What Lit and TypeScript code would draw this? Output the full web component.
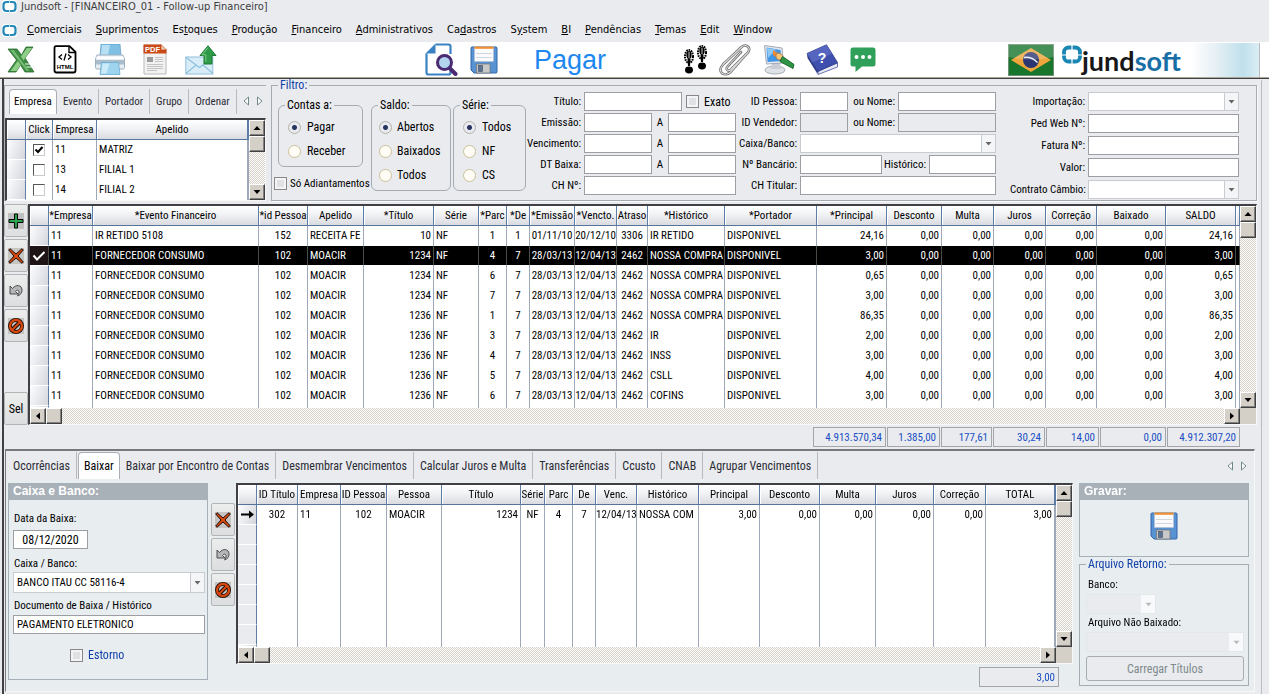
import { LitElement, html, css, nothing } from "lit";
import { customElement, property } from "lit/decorators.js";
import { classMap } from "lit/directives/class-map.js";

type Align = "l" | "c" | "r";
interface Column { title: string; width: number; align: Align; }
const col = (title: string, width: number, align: Align = "l"): Column => ({ title, width, align });

/* ---------- icons ---------- */
const plusIcon = html`<svg width="16" height="16" viewBox="0 0 16 16"><rect width="16" height="16" fill="#c0c0c0"/><path d="M6.500 1h3v5.500H15v3H9.500V15h-3V9.500H1v-3h5.500z" fill="#2fa44f" stroke="#000"/></svg>`;
const crossIcon = html`<svg width="16" height="16" viewBox="0 0 16 16"><rect width="16" height="16" fill="#c6c4c2"/><path d="M2 .7 8 6 14 .7 15.300 2 10 8l5.300 6L14 15.300 8 10l-6 5.300L.7 14 6 8 .7 2z" fill="#d9480f" stroke="#1a0d06"/></svg>`;
const undoIcon = html`<svg width="14" height="13" viewBox="0 0 14 13"><path d="M1 2v8h8L6.500 7.500C8 5.500 10 5.700 10 8c0 1.500-.7 3-1.500 4 3-1 4.800-3.300 4.500-6.500C12.600 1 7 0 3.500 4.500z" fill="#b4b6b8" stroke="#4a4e50"/></svg>`;
const stopIcon = html`<svg width="16" height="16" viewBox="0 0 16 16"><rect width="16" height="16" fill="#c6c4c2"/><circle cx="8" cy="8" r="6" fill="none" stroke="#1a0d06" stroke-width="4"/><path d="M4 12 12 4" stroke="#1a0d06" stroke-width="4"/><circle cx="8" cy="8" r="6" fill="none" stroke="#d9480f" stroke-width="2.400"/><path d="M4 12 12 4" stroke="#d9480f" stroke-width="2"/></svg>`;
const leftTri = html`<svg width="7" height="10" viewBox="0 0 7 10"><path d="M5.500 1v8L1 5z" fill="#fff" stroke="#6f8a84"/></svg>`;
const rightTri = html`<svg width="7" height="10" viewBox="0 0 7 10"><path d="M1.500 1v8L6 5z" fill="#fff" stroke="#6f8a84"/></svg>`;

const brandMark = html`<svg width="15" height="13" viewBox="0 0 15 13"><rect width="15" height="13" rx="3" fill="#fff"/><rect x="1.500" y="2" width="12" height="9" rx="3" fill="none" stroke="#2389b8" stroke-width="2.200"/><path d="M7.500 0v3M7.500 10v3" stroke="#bfe0ee" stroke-width="1"/></svg>`;

const excelIcon = html`<svg width="28" height="28" viewBox="0 0 28 28"><path d="M1 3h9l4.500 6L19 1h7l-8 11 9 14h-9l-4.500-7L9 26H1l8.500-12z" fill="#3d8b40" stroke="#2a6a30" stroke-width=".8"/><path d="M20 2h5L9.500 25H3.500z" fill="#8fce86"/><path d="M2.500 4h6.500l15.500 21h-6z" fill="#3f8f45"/><path d="M3.500 4h3L22 25h-2z" fill="#78bd78"/><path d="M18 18h8M19.500 21h7.500" stroke="#f4fbf2" stroke-width="1.200"/></svg>`;
const htmlIcon = html`<svg width="24" height="29" viewBox="0 0 24 29"><path d="M3 1.200h13.500L22.500 7v18.500q0 2-2 2H3.500q-2 0-2-2V3q0-1.800 1.500-1.800z" fill="#fff" stroke="#000" stroke-width="1.800"/><path d="M16 1.200V7.500h6.500" fill="none" stroke="#000" stroke-width="1.400"/><path d="M9 9.500 6 12l3 2.500M15 9.500l3 2.500-3 2.500M13 8.500 11 15.500" fill="none" stroke="#000" stroke-width="1.300"/><text x="12" y="24" text-anchor="middle" font-family="Liberation Sans, sans-serif" font-size="6" font-weight="700">HTML</text></svg>`;
const printerIcon = html`<svg width="30" height="31" viewBox="0 0 30 31"><path d="M6 0h19l1 12H5z" fill="#7fc0e4" stroke="#5b9cc4" stroke-width=".7"/><path d="M7 1h8l-2 10H6z" fill="#b8e0f4"/><path d="M2 11h26l1.500 4v8.500q0 1.500-1.500 1.500H2q-1.500 0-1.500-1.500V15z" fill="#e6eef4" stroke="#9db0bf"/><path d="M.8 16h28.400v4.500H.8z" fill="#a9bccb"/><path d="M1.500 12.500h27v2.500h-27z" fill="#fff"/><path d="M6.500 18.500h17l1.500 12H5z" fill="#9fd4ef" stroke="#68a9d0" stroke-width=".8"/><path d="M7.500 19.500h7l-3 10H6.200z" fill="#ccebf8"/></svg>`;
const pdfIcon = html`<svg width="24" height="31" viewBox="0 0 24 31"><path d="M1 1h17l5 5v24H1z" fill="#f2f2f2" stroke="#b9b9b9"/><path d="M.5 .5h17.500V9.500H.5zM18 5.500h5.500v4H18z" fill="#cb4a16"/><path d="M18 .5v5.500h5.500z" fill="#f6c9b0" stroke="#b04010" stroke-width=".6"/><text x="9.500" y="7.900" text-anchor="middle" font-family="Liberation Sans, sans-serif" font-size="7.500" font-weight="700" fill="#fff">PDF</text><rect x="4" y="13" width="6" height="5" fill="#9d9d9d"/><path d="M12 13.500h8M12 15.500h8M12 17.500h8M4 20.500h16M4 22.500h16M4 24.500h16M4 26.500h10" stroke="#c4c4c4"/></svg>`;
const mailIcon = html`<svg width="32" height="30" viewBox="0 0 32 30"><rect x=".8" y="12" width="27" height="17" fill="#d9edf8" stroke="#8fbfdc"/><path d="M1 28.500 11 20l3.500 2.500L18 20l10 8.500M1 12.500l13.500 10 13-10" fill="none" stroke="#8fc0de" stroke-width="1.200"/><path d="M23 .8 31 10.500h-4v8.500h-8v-8.500h-4z" fill="#2f9a48" stroke="#207a34"/><path d="M23 2.500 17 9.800h3.800v7" fill="none" stroke="#7ccd8b"/></svg>`;
const searchIcon = html`<svg width="33" height="33" viewBox="0 0 33 33"><path d="M10.500 1.500h13q2 0 2 2V11M25.500 28v1.500q0 2-2 2h-20q-2 0-2-2V10.500" fill="none" stroke="#3a82c4" stroke-width="2.200"/><path d="M10.500 .5v10H.5z" fill="#3a82c4"/><circle cx="19.500" cy="19.500" r="7" fill="#b3d4ee" stroke="#4a2a73" stroke-width="3"/><path d="M25 25.500 30.500 31" stroke="#4a2a73" stroke-width="4" stroke-linecap="round"/></svg>`;
const floppyIcon = html`<svg width="28" height="28" viewBox="0 0 28 28"><path d="M2 1h24q1 0 1 1v24q0 1-1 1H4l-3-3V2q0-1 1-1z" fill="#5793d3" stroke="#3565a8"/><rect x="4.500" y="1" width="19" height="14.500" fill="#fbfbfd" stroke="#b3c0d4" stroke-width=".7"/><rect x="4.500" y=".6" width="19" height="2.200" fill="#ef9030"/><path d="M6 7.500h16M6 11.500h16" stroke="#d0d6e0"/><rect x="6.500" y="18" width="13.500" height="9" fill="#c9c9c9" stroke="#77797d" stroke-width=".8"/><rect x="8.500" y="19.500" width="4" height="6" fill="#5d7391" stroke="#394c68" stroke-width=".6"/></svg>`;
const stepsIcon = html`<svg width="25" height="30" viewBox="0 0 25 30"><ellipse cx="6" cy="11.500" rx="4" ry="6.500" fill="none" stroke="#000" stroke-width="2" stroke-dasharray="1.600 .8"/><ellipse cx="6" cy="10" rx="2.600" ry="4" /><path d="M4.500 14h3l-.5 7H5z"/><ellipse cx="6" cy="25" rx="4" ry="3.400"/><ellipse cx="19" cy="7.500" rx="4" ry="6.500" fill="none" stroke="#000" stroke-width="2" stroke-dasharray="1.600 .8"/><ellipse cx="19" cy="6" rx="2.600" ry="4"/><path d="M17.500 10h3l-.5 7h-2z"/><ellipse cx="19" cy="21" rx="4" ry="3.400"/><path d="M6 7v6M19 3v6" stroke="#fff" stroke-width=".8"/></svg>`;
const clipIcon = html`<svg width="33" height="32" viewBox="0 0 33 32"><path d="M22 8 8.500 22.500c-2.500 3 1 5.500 3.500 3L28.500 9c5-5.500-2-9.500-6-6L4 20.500c-7 8 2 12.500 7 8L24 14" fill="none" stroke="#6f6f6f" stroke-width="2.600" stroke-linecap="round"/><path d="M22 8 8.500 22.500c-2.500 3 1 5.500 3.500 3L28.500 9c5-5.500-2-9.500-6-6L4 20.500c-7 8 2 12.500 7 8L24 14" fill="none" stroke="#dcdcdc" stroke-width="1.100" stroke-linecap="round"/></svg>`;
const paintIcon = html`<svg width="32" height="31" viewBox="0 0 32 31"><ellipse cx="12" cy="26" rx="10" ry="4" fill="#dfe3e8" stroke="#a7adb5"/><path d="M9 19h8l1 6H8z" fill="#c9ced6"/><path d="M1.500 1.500 19 4l1.500 15L3.500 20z" fill="#e4e8ee" stroke="#a4abb6"/><path d="M3.500 3.500 17.500 6l1 11-14 1z" fill="#3f96e6"/><path d="M4 4 13 5.500 5 14z" fill="#8fc8f6"/><path d="M10 6l8 5-1 5-7-5z" fill="#ee8a3c"/><path d="M13 10c3-2 6 0 7 3l-3 3c-4 0-4-3-4-6z" fill="#f4c87a" stroke="#a8672a" stroke-width=".7"/><path d="M19.500 12.500 31 20.500l-1 4-13-7z" fill="#2f9444" stroke="#1d6b2d"/></svg>`;
const bookIcon = html`<svg width="33" height="31" viewBox="0 0 33 31"><path d="M1 9.500 12 27l-.5 3L1.500 14z" fill="#2f3f8f"/><path d="M12 27 31.500 19v4L12 30.500z" fill="#e8eaf2" stroke="#4653a0" stroke-width=".8"/><path d="M1 9.500 20.500 .8 31.500 18.500 12 27.500z" fill="#3f4fae" stroke="#2a3788" stroke-width=".8"/><path d="M1 9.500 20.500 .8 26 9.500 6.500 18.500z" fill="#6676cc" opacity=".6"/><text x="16" y="19" text-anchor="middle" font-family="Liberation Sans, sans-serif" font-size="14" font-weight="700" fill="#fff">?</text></svg>`;
const chatIcon = html`<svg width="26" height="26" viewBox="0 0 26 26"><path d="M3 .5h20q2.500 0 2.500 2.500v14q0 2.500-2.500 2.500H12L5.500 25v-5.500H3Q.5 19.500.5 17V3Q.5.5 3 .5z" fill="#2fa05a"/><g fill="#fff"><circle cx="6.500" cy="10" r="2"/><circle cx="13" cy="10" r="2"/><circle cx="19.500" cy="10" r="2"/></g></svg>`;
const flagIcon = html`<svg width="46" height="32" viewBox="0 0 46 32"><rect width="46" height="32" fill="#17752c"/><rect x=".5" y=".5" width="45" height="31" fill="none" stroke="#6f8f74"/><path d="M23 4 43 16 23 28 3 16z" fill="#eda53c"/><circle cx="23" cy="16" r="8" fill="#2b3570"/><path d="M16 13.500q7.500-1 13.500 5" fill="none" stroke="#e6ecf5" stroke-width="1.500"/><path d="M0 0h46v13Q23 18 0 13z" fill="#fff" opacity=".2"/></svg>`;
const logoMark = html`<svg width="20" height="20" viewBox="0 0 20 20"><rect x="2" y="2.500" width="16" height="14" rx="4.500" fill="none" stroke="#1a86b4" stroke-width="3.800"/><path d="M10 0v6M10 13v6" stroke="#fff" stroke-width="1.200"/><path d="M0 10h5M15 10h5" stroke="#fff" stroke-width="1"/></svg>`;

const gridScroll = css`
  .bar { display: flex; background: repeating-conic-gradient(#fff 0 25%, #d4d0c8 0 50%) 0 0 / 2px 2px; }
  .bar.v { flex-direction: column; grid-column: 2; grid-row: 1; }
  .bar.h { flex-direction: row; grid-column: 1; grid-row: 2; }
  .bar button, .thumb { flex: none; width: 16px; height: 16px; padding: 0; box-sizing: border-box; display: grid; place-items: center; background: #d4d0c8; border: 1px solid; border-color: #fff #404040 #404040 #fff; box-shadow: inset -1px -1px #808080; }
  .space { flex: 1; }
  .corner { background: #d4d0c8; }
`;
const arrow = (d: string, label: string) => html`<button type="button" aria-label=${label}><svg width="8" height="8" viewBox="0 0 8 8"><path d=${d}/></svg></button>`;

@customElement("data-grid")
class DataGrid extends LitElement {
  @property({ attribute: false }) columns: Column[] = [];
  @property({ attribute: false }) rows: (string | boolean)[][] = [];
  @property({ type: Number }) blanks = 0;
  @property({ type: Number }) selected = -1;
  @property({ type: Number }) current = -1;
  @property({ type: Boolean }) hbar = false;
  @property({ type: Boolean }) stub = false;
  @property() caption = "";

  static styles = [gridScroll, css`
    :host { display: block; min-width: 0; border: 2px solid; border-color: #3f3f44 #f8f8f8 #f8f8f8 #3f3f44; border-right-width: 1px; border-bottom-width: 1px; }
    .frame { display: grid; grid-template-columns: minmax(0, 1fr) 16px; }
    table { width: 100%; table-layout: fixed; border-collapse: separate; border-spacing: 0; background: #fff; font: 11px/18px "Roboto Condensed", "Liberation Sans", sans-serif; color: #000; }
    th, td { box-sizing: border-box; height: 20px; padding: 0 2px; white-space: nowrap; overflow: hidden; font-weight: 400; }
    th { padding: 0; text-align: center; background: linear-gradient(#fff, #f1f2f5 45%, #d9dbe0); border-right: 1px solid #5d7da6; border-bottom: 1px solid #54749c; box-shadow: inset 1px 0 #fff; }
    td { border-right: 1px solid #9ea8b8; }
    td.c { text-align: center; padding: 0; } td.r { text-align: right; }
    td.mark { padding: 0; text-align: center; background: linear-gradient(110deg, #fdfdfe, #e4e6eb 60%, #d3d6dc); border-right: 1px solid #5d7da6; border-bottom: 1px solid #fff; }
    tr.blank td.mark { background: #e9ebef; }
    tr.sel td { background: #000; color: #fff; border-right-color: #4b4b46; border-bottom: 1px solid #fff; }
    tr.sel td.mark { background: #1e1416; }
    tr.stub td { height: 2px; line-height: 0; }
    svg { display: block; margin: auto; }
    input { appearance: none; display: block; width: 12px; height: 12px; margin: auto; box-sizing: border-box; border: 1px solid; border-color: #55555a #c9c9c9 #c9c9c9 #55555a; background: #fff; }
    input:checked { background: #fff url("data:image/svg+xml,%3Csvg xmlns='http://www.w3.org/2000/svg' viewBox='0 0 10 10'%3E%3Cpath d='M1.500 4.500 4 7l4.500-5' fill='none' stroke='%23000' stroke-width='2'/%3E%3C/svg%3E") center / 10px; }
  `];

  private mark(i: number) {
    if (i === this.selected) return html`<svg width="14" height="12" viewBox="0 0 14 12"><path d="M1.500 5.500 5 9.500 12.500 2" fill="none" stroke="#fff" stroke-width="2"/></svg>`;
    if (i === this.current) return html`<svg width="13" height="9" viewBox="0 0 13 9"><path d="M0 4.500h10" stroke="#000" stroke-width="2"/><path d="M8 .5 13 4.500 8 8.500z"/></svg>`;
    return nothing;
  }

  render() {
    const cells = (r: (string | boolean)[]) => this.columns.map((c, i) => html`<td class=${c.align}>${typeof r[i] === "boolean"
      ? html`<input type="checkbox" aria-label=${`Click ${r[i + 1]}`} .checked=${r[i] as boolean}>` : r[i] ?? ""}</td>`);
    const empty = html`<td class="mark"></td>${this.columns.map(() => html`<td></td>`)}<td></td>`;
    return html`<div class="frame">
      <table aria-label=${this.caption}>
        <colgroup><col style="width:19px">${this.columns.map(c => html`<col style=${`width:${c.width}px`}>`)}<col></colgroup>
        <thead><tr><th></th>${this.columns.map(c => html`<th scope="col">${c.title}</th>`)}<th></th></tr></thead>
        <tbody>
          ${this.rows.map((r, i) => html`<tr class=${classMap({ sel: i === this.selected })}><td class="mark">${this.mark(i)}</td>${cells(r)}<td></td></tr>`)}
          ${Array.from({ length: this.blanks }, () => html`<tr class="blank">${empty}</tr>`)}
          ${this.stub ? html`<tr class="stub">${empty}</tr>` : nothing}
        </tbody>
      </table>
      <div class="bar v">${arrow("M4 2 7.500 6h-7z", "Acima")}<span class="thumb"></span><span class="space"></span>${arrow("M4 6 7.500 2h-7z", "Abaixo")}</div>
      ${this.hbar ? html`<div class="bar h">${arrow("M2 4 6 .5v7z", "Esquerda")}<span class="thumb"></span><span class="space"></span>${arrow("M6 4 2 .5v7z", "Direita")}</div><span class="corner"></span>` : nothing}
    </div>`;
  }
}

const mainColumns = [
  col("*Empresa", 44), col("*Evento Financeiro", 166), col("*id Pessoa", 49, "c"), col("Apelido", 56), col("*Título", 70, "r"), col("Série", 45),
  col("*Parc", 28, "c"), col("*De", 23, "c"), col("*Emissão", 45, "c"), col("*Vencto.", 42, "c"), col("Atraso", 31, "c"), col("*Histórico", 77),
  col("*Portador", 92), col("*Principal", 70, "r"), col("Desconto", 55, "r"), col("Multa", 52, "r"), col("Juros", 52, "r"), col("Correção", 51, "r"),
  col("Baixado", 69, "r"), col("SALDO", 70, "r"),
];
const entry = (evento: string, id: string, apelido: string, titulo: string, parc: string, de: string, em: string, venc: string, atraso: string, hist: string, v: string) =>
  ["11", evento, id, apelido, titulo, "NF", parc, de, em, venc, atraso, hist, "DISPONIVEL", v, "0,00", "0,00", "0,00", "0,00", "0,00", v];
const moacir = (titulo: string, parc: string, hist: string, v: string) =>
  entry("FORNECEDOR CONSUMO", "102", "MOACIR", titulo, parc, "7", "28/03/13", "12/04/13", "2462", hist, v);
const mainRows = [
  entry("IR RETIDO 5108", "152", "RECEITA FE", "10", "1", "1", "01/11/10", "20/12/10", "3306", "IR RETIDO", "24,16"),
  moacir("1234", "4", "NOSSA COMPRA", "3,00"), moacir("1234", "6", "NOSSA COMPRA", "0,65"),
  moacir("1234", "7", "NOSSA COMPRA", "3,00"), moacir("1236", "1", "NOSSA COMPRA", "86,35"),
  moacir("1236", "3", "IR", "2,00"), moacir("1236", "4", "INSS", "3,00"), moacir("1236", "5", "CSLL", "4,00"), moacir("1236", "6", "COFINS", "3,00"),
];
const payColumns = [
  col("ID Título", 41, "c"), col("Empresa", 43), col("ID Pessoa", 46, "c"), col("Pessoa", 55), col("Título", 79, "r"), col("Série", 24, "c"),
  col("Parc", 28, "c"), col("De", 23, "c"), col("Venc.", 41, "c"), col("Histórico", 62), col("Principal", 61, "r"), col("Desconto", 60, "r"),
  col("Multa", 56, "r"), col("Juros", 58, "r"), col("Correção", 52, "r"), col("TOTAL", 69, "r"),
];
const payRows = [["302", "11", "102", "MOACIR", "1234", "NF", "4", "7", "12/04/13", "NOSSA COM", "3,00", "0,00", "0,00", "0,00", "0,00", "3,00"]];
const companyColumns = [col("Click", 27, "c"), col("Empresa", 44), col("Apelido", 151)];
const companyRows = [[true, "11", "MATRIZ"], [false, "13", "FILIAL 1"], [false, "14", "FILIAL 2"]];

/* menu captions: text before the access key, the key, text after it */
const menu = [["", "C", "omerciais"], ["", "S", "uprimentos"], ["Es", "t", "oques"], ["", "P", "rodução"], ["", "F", "inanceiro"], ["", "A", "dministrativos"],
  ["Ca", "d", "astros"], ["S", "y", "stem"], ["", "B", "I"], ["", "P", "endências"], ["", "T", "emas"], ["", "E", "dit"], ["", "W", "indow"]];
const totals: [string, string, number][] = [["Principal", "4.913.570,34", 73], ["Desconto", "1.385,00", 53], ["Multa", "177,61", 51], ["Juros", "30,24", 52],
  ["Correção", "14,00", 53], ["Baixado", "0,00", 66], ["Saldo", "4.912.307,20", 73]];

@customElement("app-root")
class AppRoot extends LitElement {
  static styles = css`
    :host { display: block; background: #e9ebef; color: #000; font: 11px/14px "Roboto Condensed", "Liberation Sans", sans-serif; }
    button, input, select { font: inherit; color: inherit; box-sizing: border-box; margin: 0; border-radius: 0; }
    button { padding: 0; border: 0; background: none; }
    svg { display: block; flex: none; }

    .title { display: flex; align-items: center; gap: 4px; height: 13px; padding-left: 2px; font: 11px/13px "DejaVu Sans Condensed", Tahoma, sans-serif; color: #3d3d3d; overflow: hidden; }
    .menu { display: flex; align-items: center; height: 24px; padding: 5px 0 0 2px; font: 11px/14px "DejaVu Sans Condensed", Tahoma, sans-serif; }
    .menu ul { display: flex; gap: 14px; margin: 0; padding: 0 0 0 10px; list-style: none; }
    .menu a { color: #000; text-decoration: none; }
    .tools { display: flex; align-items: center; height: 35px; background: #fff; border-bottom: 1px solid #aca899; box-shadow: 0 1px #3f3f44; }
    .tools div { display: flex; align-items: center; }
    .files { gap: 18px; padding-left: 7px; width: 418px; }
    .find { gap: 12px; }
    .heading { margin: 0 0 0 36px; width: 149px; font: 27px/32px "Liberation Sans", Arial, sans-serif; color: #1e88f0; }
    .extras { gap: 11px; }
    .brand { margin-left: auto; gap: 8px; padding-right: 9px; }
    .logo { width: 197px; height: 34px; background: linear-gradient(90deg, #fff 65%, #e6f0f5 78%, #bfe0ec 92%, #dceef5); border-right: 1px solid #b6bcc2; }
    .logo svg { align-self: flex-start; margin-top: 2px; }
    .logo b { font: 700 27px/28px Lato, sans-serif; color: #17171a; padding-top: 2px; }
    .logo i { font-style: normal; color: #176fa6; }

    .form { margin: 1px 8px 0 2px; padding-bottom: 2px; border: 1px solid #3f3f44; border-width: 0 0 0 2px; box-shadow: 1px 1px #b9bcc1; }
    .filters { display: grid; grid-template-columns: 262px minmax(0, 1fr); gap: 5px; padding-right: 4px; }
    .lookup { margin-top: 6px; border-top: 1px solid #a9adb4; border-left: 1px solid #a9adb4; }
    .lookup data-grid { margin-top: 4px; }
    .tabs { display: flex; align-items: flex-end; height: 28px; color: #2b2b35; }
    .tabs button { height: 25px; padding: 0 6px; border-right: 1px solid #b6b9bf; }
    .tabs button[aria-selected="true"] { background: #fff; border-radius: 4px 4px 0 0; border: 1px solid #a9adb4; border-bottom: 0; padding: 0 4px; margin-left: 4px; color: #000; }
    .tabs .nav { border: 0; height: 27px; padding: 0 0 0 6px; }
    .tabs .push { margin-left: auto; }

    fieldset { margin: 0; padding: 0; border: 1px solid #a5acb4; min-width: 0; }
    legend { margin-left: 6px; padding: 0 2px; color: #0f3fa8; font-size: 12px; line-height: 13px; }
    .filter { display: flex; box-shadow: 1px 1px #fafafa; }
    .group { border-radius: 6px; padding: 3px 0; font-size: 12px; }
    .group legend { color: #000; }
    .pay { width: 97px; padding-left: 2px; }
    .pay .group { margin: 7px 8px 0 4px; }
    .saldo { width: 80px; margin: 7px 2px 0 0; }
    .serie { width: 73px; margin-top: 7px; }
    .group label, .check { display: flex; align-items: center; }
    .group label { height: 24px; padding-left: 9px; gap: 6px; }
    .saldo label { padding-left: 7px; gap: 5px; }
    input[type="radio"] { appearance: none; width: 13px; height: 13px; border: 1px solid #c9bf95; border-radius: 50%; background: #fffdf6; }
    input[type="radio"]:checked { background: radial-gradient(circle, #27345e 0 2px, #e9eaf0 3px 5px); border-color: #b3b1a6; }
    input[type="checkbox"] { appearance: none; width: 13px; height: 13px; border: 1px solid #8b8688; background: #dfe1e5; box-shadow: inset 0 0 0 2px #f3f4f6; }
    .check { gap: 5px; }
    .pay .check { margin-top: 10px; white-space: nowrap; gap: 3px; line-height: 13px; }

    .fields { display: grid; align-content: start; grid-auto-rows: 19px; row-gap: 2px; align-items: center; }
    .fields > label { text-align: right; padding-right: 3px; white-space: nowrap; }
    .fields > div { display: flex; align-items: center; height: 19px; }
    .dates { grid-template-columns: 58px 152px; }
    .people { grid-template-columns: 64px 196px; }
    .orders { grid-template-columns: 78px 151px; row-gap: 3px; margin-left: auto; padding-right: 17px; }
    .text, select { height: 19px; border: 1px solid #9c9ea3; background: #fff; padding: 0 3px; min-width: 0; flex: 1; width: 100%; }
    .text:disabled { background: #e9ebef; opacity: 1; }
    select { appearance: none; border-color: #c8cbd0; border-radius: 0; opacity: 1; background: url("data:image/svg+xml,%3Csvg xmlns='http://www.w3.org/2000/svg' viewBox='0 0 14 19'%3E%3Crect width='14' height='19' fill='%23f4f5f7'/%3E%3Cpath d='M.5 0v19' stroke='%23c8cbd0'/%3E%3Cpath d='M4.500 8h6l-3 3.500z' fill='%23666'/%3E%3C/svg%3E") right center / 14px 19px no-repeat, #fff; }
    select:disabled { border-color: #e4e6e8; background-color: #e9ebef; background-image: url("data:image/svg+xml,%3Csvg xmlns='http://www.w3.org/2000/svg' viewBox='0 0 14 19'%3E%3Crect width='14' height='19' fill='%23f8f9fa'/%3E%3Cpath d='M4.500 8h6l-3 3.500z' fill='%23b8babc'/%3E%3C/svg%3E"); }
    .w48 { flex: 0 0 48px; } .w66 { flex: 0 0 67px; } .w68 { flex: 0 0 68px; } .w82 { flex: 0 0 82px; } .w98 { flex: 0 0 98px; }
    .gap { flex: 1; text-align: center; }
    .before { margin-left: auto; padding-right: 3px; white-space: nowrap; }
    .dates .check { margin-left: 4px; font-size: 12px; }

    .work { display: grid; grid-template-columns: 24px minmax(0, 1fr); margin-top: 3px; padding-right: 4px; }
    .acts { display: flex; flex-direction: column; gap: 2px; }
    .acts button { display: grid; place-items: center; width: 24px; height: 33px; border: 1px solid #b2b4b6; border-radius: 2px; background: linear-gradient(#eceded, #dcdedf); font-size: 12px; }
    .acts .last { margin-top: auto; }
    .sums { display: flex; justify-content: flex-end; gap: 1px; padding: 2px 21px 0 0; }
    .sums input, .sum { height: 20px; text-align: right; color: #1a4fc4; background: #e9ebef; border: 1px solid #a3a5a9; padding: 0 3px; }

    .lower { margin: 2px 6px 0 1px; border: 1px solid; border-color: #77797d #f8f8f8 #f8f8f8 #77797d; border-top-width: 2px; }
    .lower > .tabs { font-size: 12px; height: 28px; padding-left: 1px; }
    .lower > .tabs button { height: 27px; padding: 0 6px; }
    .lower > .tabs button[aria-selected="true"] { margin-left: 1px; padding: 0 5px; }
    .lower > .tabs .nav { padding: 0 3px; }
    .lower > .tabs .nav:last-child { padding-right: 7px; }
    .pane { display: grid; align-items: start; grid-template-columns: 202px 24px minmax(0, 1fr) 170px; column-gap: 1px; padding: 4px 5px 4px 2px; background: #e8edf0; }
    .cashbox { margin-right: 2px; }
    .paying { margin-right: 5px; min-width: 0; }
    .pane .acts { padding-top: 20px; }
    .box { border: 1px solid #a5b0b8; }
    .box h2 { margin: 0; padding-left: 4px; height: 16px; background: #a8b0b8; color: #fff; font: 700 12px/15px "Liberation Sans", Arial, sans-serif; }
    .cash { display: flex; flex-direction: column; padding: 12px 2px 17px 4px; align-items: flex-start; }
    .cash > label { padding-left: 1px; }
    .cash .text, .cash select { flex: none; }
    .cash .date { width: 75px; text-align: center; font-size: 12px; margin: 4px 0 8px; }
    .cash select { height: 21px; margin: 1px 0 6px; }
    .cash .doc { margin-top: 2px; outline: none; }
    .cash .check { margin: 14px 0 0 56px; color: #0f3fa8; font-size: 12px; }
    .sum { display: block; width: 80px; margin: 3px 14px 0 auto; }
    .save { display: grid; place-items: center; width: 100%; height: 56px; padding-bottom: 4px; }
    .return { margin-top: 1px; padding: 7px 4px 4px 6px; }
    .return legend { margin-left: 0; }
    .return label { display: block; padding: 0 0 2px 2px; }
    .return select { height: 20px; display: block; margin-bottom: 2px; }
    .return .bank { width: 70px; }
    .return button { width: 100%; height: 25px; margin-top: 2px; border: 1px solid #a9adb1; border-radius: 3px; background: #e9ebef; color: #808a8c; font-size: 12px; }
  `;

  private radios(name: string, items: string[]) {
    return items.map((t, i) => html`<label><input type="radio" name=${name} .checked=${i === 0}>${t}</label>`);
  }
  private range(id: string, label: string) {
    return html`<label for=${id}>${label}</label><div><input class="text w68" id=${id}><label class="gap" for=${id + "2"}>A</label><input class="text w68" id=${id + "2"}></div>`;
  }
  private icon(label: string, pic: unknown) {
    return html`<button type="button" aria-label=${label}>${pic}</button>`;
  }

  render() {
    return html`
      <header>
        <div class="title">${brandMark}<span>Jundsoft - [FINANCEIRO_01 - Follow-up Financeiro]</span></div>
        <nav class="menu">${brandMark}<ul>${menu.map(([a, k, b]) => html`<li><a href="#">${a}<u>${k}</u>${b}</a></li>`)}</ul></nav>
        <div class="tools">
          <div class="files">${this.icon("Excel", excelIcon)}${this.icon("HTML", htmlIcon)}${this.icon("Imprimir", printerIcon)}${this.icon("PDF", pdfIcon)}${this.icon("Enviar", mailIcon)}</div>
          <div class="find">${this.icon("Pesquisar", searchIcon)}${this.icon("Salvar", floppyIcon)}</div>
          <h1 class="heading">Pagar</h1>
          <div class="extras">${this.icon("Passos", stepsIcon)}${this.icon("Anexos", clipIcon)}${this.icon("Aparência", paintIcon)}${this.icon("Ajuda", bookIcon)}${this.icon("Mensagens", chatIcon)}</div>
          <div class="brand">${this.icon("Idioma", flagIcon)}<div class="logo">${logoMark}<b>jund<i>soft</i></b></div></div>
        </div>
      </header>
      <main class="form">
        <section class="filters">
          <div class="lookup">
            <div class="tabs" role="tablist">
              ${["Empresa", "Evento", "Portador", "Grupo", "Ordenar"].map((t, i) => html`<button type="button" role="tab" aria-selected=${i === 0 ? "true" : "false"}>${t}</button>`)}
              <button class="nav" type="button" aria-label="Anterior">${leftTri}</button><button class="nav" type="button" aria-label="Próxima">${rightTri}</button>
            </div>
            <data-grid caption="Empresas" .columns=${companyColumns} .rows=${companyRows}></data-grid>
          </div>
          <fieldset class="filter">
            <legend>Filtro:</legend>
            <div class="pay">
              <fieldset class="group"><legend>Contas a:</legend>${this.radios("contas", ["Pagar", "Receber"])}</fieldset>
              <label class="check"><input type="checkbox">Só Adiantamentos</label>
            </div>
            <div class="saldo"><fieldset class="group"><legend>Saldo:</legend>${this.radios("saldo", ["Abertos", "Baixados", "Todos"])}</fieldset></div>
            <div class="serie"><fieldset class="group"><legend>Série:</legend>${this.radios("serie", ["Todos", "NF", "CS"])}</fieldset></div>
            <div class="fields dates">
              <label for="titulo">Título:</label><div><input class="text w98" id="titulo"><label class="check"><input type="checkbox">Exato</label></div>
              ${this.range("emissao", "Emissão:")}${this.range("vencimento", "Vencimento:")}${this.range("baixa", "DT Baixa:")}
              <label for="ch">CH Nº:</label><input class="text" id="ch">
            </div>
            <div class="fields people">
              <label for="pessoa">ID Pessoa:</label><div><input class="text w48" id="pessoa"><label class="before" for="nome">ou Nome:</label><input class="text w98" id="nome"></div>
              <label for="vendedor">ID Vendedor:</label><div><input class="text w48" id="vendedor" disabled><label class="before" for="vnome">ou Nome:</label><input class="text w98" id="vnome" disabled></div>
              <label for="caixa">Caixa/Banco:</label><select id="caixa"><option></option></select>
              <label for="bancario">Nº Bancário:</label><div><input class="text w82" id="bancario"><label class="before" for="hist">Histórico:</label><input class="text w66" id="hist"></div>
              <label for="titular">CH Titular:</label><input class="text" id="titular">
            </div>
            <div class="fields orders">
              <label for="imp">Importação:</label><select id="imp"><option></option></select>
              <label for="ped">Ped Web Nº:</label><input class="text" id="ped">
              <label for="fatura">Fatura Nº:</label><input class="text" id="fatura">
              <label for="valor">Valor:</label><input class="text" id="valor">
              <label for="cambio">Contrato Câmbio:</label><select id="cambio"><option></option></select>
            </div>
          </fieldset>
        </section>

        <section class="work">
          <div class="acts">${this.icon("Incluir", plusIcon)}${this.icon("Excluir", crossIcon)}${this.icon("Desfazer", undoIcon)}${this.icon("Cancelar", stopIcon)}<button class="last" type="button">Sel</button></div>
          <data-grid caption="Títulos" hbar stub .columns=${mainColumns} .rows=${mainRows} .selected=${1}></data-grid>
        </section>
        <div class="sums">${totals.map(([n, v, w]) => html`<input readonly aria-label=${`Total ${n}`} .value=${v} style=${`width:${w}px`}>`)}</div>

        <section class="lower">
          <div class="tabs" role="tablist">
            ${["Ocorrências", "Baixar", "Baixar por Encontro de Contas", "Desmembrar Vencimentos", "Calcular Juros e Multa", "Transferências", "Ccusto", "CNAB", "Agrupar Vencimentos"]
              .map((t, i) => html`<button type="button" role="tab" aria-selected=${i === 1 ? "true" : "false"}>${t}</button>`)}
            <button class="nav push" type="button" aria-label="Anterior">${leftTri}</button><button class="nav" type="button" aria-label="Próxima">${rightTri}</button>
          </div>
          <div class="pane">
            <section class="box cashbox">
              <h2>Caixa e Banco:</h2>
              <div class="cash">
                <label for="data">Data da Baixa:</label><input class="text date" id="data" .value=${"08/12/2020"}>
                <label for="conta">Caixa / Banco:</label><select id="conta"><option>BANCO ITAU CC 58116-4</option></select>
                <label for="doc">Documento de Baixa / Histórico</label><input class="text doc" id="doc" .value=${"PAGAMENTO ELETRONICO"}>
                <label class="check"><input type="checkbox">Estorno</label>
              </div>
            </section>
            <div class="acts">${this.icon("Excluir", crossIcon)}${this.icon("Desfazer", undoIcon)}${this.icon("Cancelar", stopIcon)}</div>
            <div class="paying">
              <data-grid caption="Títulos a baixar" hbar stub .columns=${payColumns} .rows=${payRows} .blanks=${6} .current=${0}></data-grid>
              <input class="sum" readonly aria-label="Total a baixar" .value=${"3,00"}>
            </div>
            <div>
              <section class="box"><h2>Gravar:</h2><button class="save" type="button" aria-label="Gravar">${floppyIcon}</button></section>
              <fieldset class="return"><legend>Arquivo Retorno:</legend>
                <label for="banco">Banco:</label><select class="bank" id="banco" disabled><option></option></select>
                <label for="arquivo">Arquivo Não Baixado:</label><select id="arquivo" disabled><option></option></select>
                <button type="button" disabled>Carregar Títulos</button>
              </fieldset>
            </div>
          </div>
        </section>
      </main>`;
  }
  firstUpdated() {
    const doc = this.renderRoot.querySelector<HTMLInputElement>("#doc")!;
    doc.focus({ preventScroll: true });
    doc.setSelectionRange(doc.value.length, doc.value.length);
  }
}
